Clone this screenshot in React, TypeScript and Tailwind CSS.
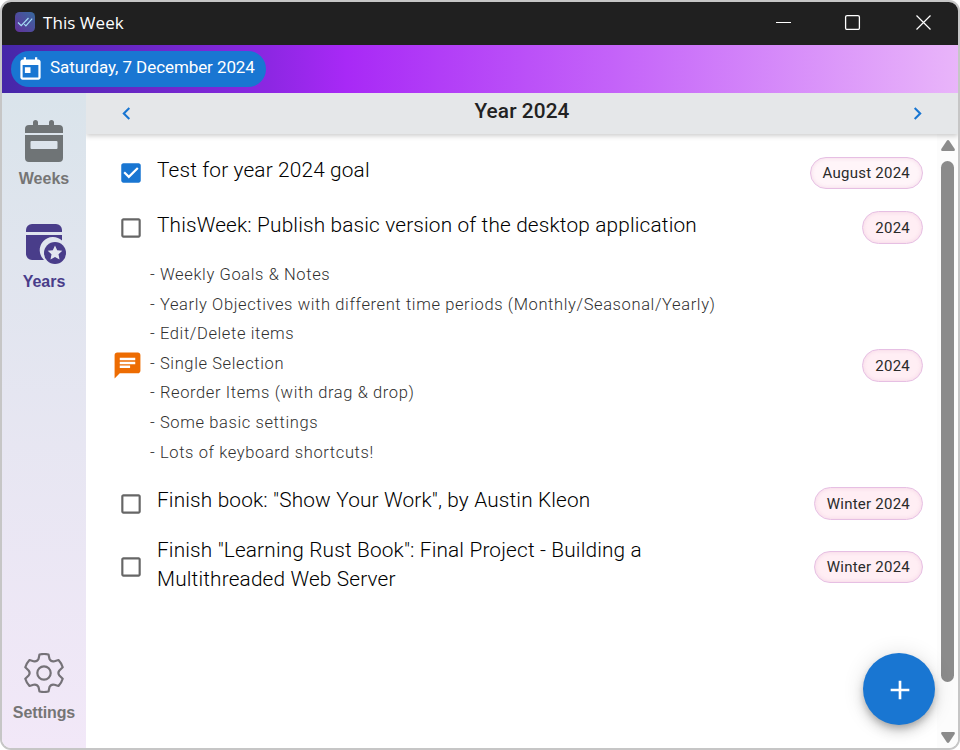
import React from "react";

const notes = [
  "- Weekly Goals & Notes",
  "- Yearly Objectives with different time periods (Monthly/Seasonal/Yearly)",
  "- Edit/Delete items",
  "- Single Selection",
  "- Reorder Items (with drag & drop)",
  "- Some basic settings",
  "- Lots of keyboard shortcuts!",
];

function Icon({ d, className }: { d: string; className: string }) {
  return (
    <svg viewBox="0 0 24 24" fill="currentColor" className={className}>
      <path d={d} />
    </svg>
  );
}

function Check({ checked = false }: { checked?: boolean }) {
  return checked ? (
    <Icon
      className="size-[26px] shrink-0 text-[#1976d2]"
      d="M19 3H5c-1.11 0-2 .9-2 2v14c0 1.1.89 2 2 2h14c1.11 0 2-.9 2-2V5c0-1.1-.89-2-2-2zm-9 14l-5-5 1.41-1.41L10 14.17l7.59-7.59L19 8l-9 9z"
    />
  ) : (
    <Icon
      className="size-[26px] shrink-0 text-[#666666]"
      d="M19 5v14H5V5h14m0-2H5c-1.1 0-2 .9-2 2v14c0 1.1.9 2 2 2h14c1.1 0 2-.9 2-2V5c0-1.1-.9-2-2-2z"
    />
  );
}

function Chip({ label, light = false, short = false }: { label: string; light?: boolean; short?: boolean }) {
  return (
    <div
      className={
        "ml-auto mr-[14px] flex shrink-0 items-center rounded-full border border-[#e6bfe3] px-3 pt-px text-[15px] tracking-[0.24px] text-[#2a2a2a] shadow-[inset_0_0_4px_rgba(225,170,205,0.4)] " +
        (light ? "bg-[#fff5f9] " : "bg-[#ffeef4] ") +
        (short ? "h-8" : "h-[33px]")
      }
    >
      {label}
    </div>
  );
}

function Goal({
  children,
  chip,
  checked,
  light,
  short,
  className,
}: {
  children: React.ReactNode;
  chip: string;
  checked?: boolean;
  light?: boolean;
  short?: boolean;
  className: string;
}) {
  return (
    <div className={"flex items-center pl-8 " + className}>
      <Check checked={checked} />
      <div className="ml-[13px] text-[20.8px] leading-[29px] font-light tracking-[0.16px] text-black">{children}</div>
      <Chip label={chip} light={light} short={short} />
    </div>
  );
}

export default function App() {
  return (
    <div className="flex h-[750px] w-[960px] flex-col overflow-hidden rounded-[11px] border-2 border-[#c6c6c6] bg-white font-['Roboto',sans-serif]">
      <header className="flex h-[43px] shrink-0 items-center bg-[#202020] pb-[3px] pl-[13px] text-white">
        <svg viewBox="0 0 20 20" className="size-5">
          <defs>
            <linearGradient id="logo" x1="0" y1="1" x2="1" y2="0">
              <stop offset="0" stopColor="#62309a" />
              <stop offset="1" stopColor="#37699d" />
            </linearGradient>
          </defs>
          <rect width="20" height="20" rx="4.5" fill="url(#logo)" />
          <path d="M3 10.5l3.2 3.2 7.3-7.7M9.2 12.2l1.7 1.7L17.2 6.6" fill="none" stroke="#a5dcf5" strokeWidth="1.2" />
        </svg>
        <span className="ml-2 pt-px font-['Open_Sans',sans-serif] text-[17px] tracking-[0.05px]">This Week</span>
        <svg viewBox="0 0 156 16" fill="none" stroke="white" className="mr-[26px] ml-auto h-4 w-[156px]">
          <path d="M0 8.5h15" />
          <rect x="69.6" y="1.6" width="13.8" height="13.8" rx="1.5" strokeWidth="1.3" />
          <path d="M140.5 1.5l14 14M154.5 1.5l-14 14" strokeWidth="1.2" />
        </svg>
      </header>

      <div className="flex h-12 shrink-0 items-center bg-[linear-gradient(90deg,#4527a8_0%,#8d27e3_28%,#a829f6_36%,#c463f9_64%,#e9b5fa_100%)] pl-[9px]">
        <div className="flex h-9 items-center rounded-full bg-[#1976d2] pl-[6px] pr-[11px] text-white">
          <Icon
            className="size-[27px]"
            d="M19 3h-1V1h-2v2H8V1H6v2H5c-1.11 0-1.99.9-1.99 2L3 19c0 1.1.89 2 2 2h14c1.1 0 2-.9 2-2V5c0-1.1-.9-2-2-2zm0 16H5V8h14v11zM7 10h5v5H7z"
          />
          <span className="ml-[6px] pb-[3px] text-[17px] tracking-[-0.08px]">Saturday, 7 December 2024</span>
        </div>
      </div>

      <div className="flex min-h-0 flex-1">
        <nav className="flex w-[84px] shrink-0 flex-col items-center bg-linear-to-b from-[#dae4eb] to-[#f2e8f8] pt-[27px] font-['Liberation_Sans',sans-serif] text-[16px] font-bold text-[#757575]">
          <svg viewBox="0 0 38 42" className="h-[42px] w-[38px]" fill="#6f7476">
            <path d="M4 5h4V2.5a2.5 2.5 0 0 1 5 0V5h11V2.5a2.5 2.5 0 0 1 5 0V5h5a4 4 0 0 1 4 4v4H0V9a4 4 0 0 1 4-4z" />
            <path fillRule="evenodd" d="M0 15h38v23a4 4 0 0 1-4 4H4a4 4 0 0 1-4-4zM6.5 21a1 1 0 0 0-1 1v6a1 1 0 0 0 1 1h25a1 1 0 0 0 1-1v-6a1 1 0 0 0-1-1z" />
          </svg>
          <span className="mt-[5px] leading-6">Weeks</span>
          <svg viewBox="0 0 40 40" className="ml-1 mt-[33px] size-10" fill="#493d8a">
            <path d="M6 0h24a6 6 0 0 1 6 6v2H0V6a6 6 0 0 1 6-6zM0 11h36v5.5A13 13 0 0 0 18 36H6a6 6 0 0 1-6-6z" />
            <circle cx="29" cy="29" r="11" />
            <path d="M29 21.5l2.2 4.7 5.1.6-3.8 3.5 1 5.1-4.5-2.5-4.5 2.5 1-5.1-3.8-3.5 5.1-.6z" fill="#e2e5ef" />
          </svg>
          <span className="mt-[6px] leading-6 text-[#493d8a]">Years</span>
          <svg viewBox="0 0 40 40" className="mt-auto size-10" fill="none" stroke="#757278" strokeWidth="2.2" strokeLinejoin="round">
            <circle cx="20" cy="20" r="6.7" />
            <path d="M15.5 1.5q4.5-1 9 0l1 4.5q1.5 3 5 2.2l4-1.2q3 3.2 4.2 7.3l-3.3 3.2q-2 2.5 0 5l3.3 3.2q-1.2 4.1-4.2 7.3l-4-1.2q-3.5-.8-5 2.2l-1 4.5q-4.5 1-9 0l-1-4.5q-1.5-3-5-2.2l-4 1.2q-3-3.2-4.2-7.3l3.3-3.2q2-2.5 0-5l-3.3-3.2q1.2-4.1 4.2-7.3l4 1.2q3.5.8 5-2.2z" />
          </svg>
          <span className="mb-[23px] mt-2 leading-6 tracking-[-0.1px]">Settings</span>
        </nav>

        <div className="relative flex min-w-0 flex-1 flex-col">
          <div className="z-10 flex h-[41px] shrink-0 items-center justify-between bg-[#e5e7e9] pl-7 pr-7 shadow-[0_2px_5px_rgba(0,0,0,0.2)] [clip-path:inset(0_0_-10px_0)]">
            <Icon className="size-[25px] text-[#1976d2]" d="M15.41 7.41L14 6l-6 6 6 6 1.41-1.41L10.83 12z" />
            <h1 className="pb-[3px] text-[20.8px] font-medium tracking-[0.1px] text-[#222]">Year 2024</h1>
            <Icon className="size-[25px] text-[#1976d2]" d="M10 6L8.59 7.41 13.17 12l-4.58 4.59L10 18l6-6z" />
          </div>

          <div className="flex min-h-0 flex-1">
            <main className="min-w-0 flex-1 pt-[11px]">
              <Goal chip="August 2024" checked light short className="h-[55px] [&>div:nth-child(2)]:pb-1">Test for year 2024 goal</Goal>
              <Goal chip="2024" className="h-[55px] [&>div:nth-child(2)]:pb-1">ThisWeek: Publish basic version of the desktop application</Goal>
              <div className="flex h-[221px] items-center pl-[26px]">
                <Icon
                  className="size-[31px] shrink-0 text-[#ed6c02]"
                  d="M20 2H4c-1.1 0-1.99.9-1.99 2L2 22l4-4h14c1.1 0 2-.9 2-2V4c0-1.1-.9-2-2-2zM6 9h12v2H6V9zm8 5H6v-2h8v2zm4-6H6V6h12v2z"
                />
                <div className="ml-[7px] pb-[3.7px] text-[16.5px] font-light leading-[29.63px] tracking-[0.61px] text-[#303030]">
                  {notes.map((n) => (
                    <p key={n}>{n}</p>
                  ))}
                </div>
                <Chip label="2024" />
              </div>
              <Goal chip="Winter 2024" className="h-[55px] [&>div:nth-child(2)]:pb-[6px]">Finish book: "Show Your Work", by Austin Kleon</Goal>
              <Goal chip="Winter 2024" short className="h-[72px] [&>div:nth-child(2)]:pb-1">
                Finish "Learning Rust Book": Final Project - Building a
                <br />
                Multithreaded Web Server
              </Goal>
            </main>
            <div className="flex w-[21px] shrink-0 flex-col items-center bg-[#fcfcfc] pt-[6px] pb-[5px]">
              <svg viewBox="0 0 14 11" className="h-[11px] w-[14px]" fill="#8b8b8b">
                <path d="M5.8.7q1.2-1.3 2.4 0L13.7 9q.6 2-1 2H1.3q-1.6 0-1-2z" />
              </svg>
              <div className="mt-[10px] h-[521px] w-[13px] rounded-full bg-[#8b8b8b]" />
              <svg viewBox="0 0 14 11" className="mt-auto h-[11px] w-[14px]" fill="#8b8b8b">
                <path d="M5.8 10.3q1.2 1.3 2.4 0L13.7 2q.6-2-1-2H1.3q-1.6 0-1 2z" />
              </svg>
            </div>
          </div>

          <button className="absolute bottom-[23px] right-[23px] flex size-[72px] items-center justify-center rounded-full bg-[#1976d2] pt-px pl-px text-white shadow-[0_4px_6px_-1px_rgba(0,0,0,0.2),0_7px_12px_rgba(0,0,0,0.14),0_1px_22px_rgba(0,0,0,0.12)]">
            <Icon className="size-8" d="M19 13h-6v6h-2v-6H5v-2h6V5h2v6h6v2z" />
          </button>
        </div>
      </div>
    </div>
  );
}
